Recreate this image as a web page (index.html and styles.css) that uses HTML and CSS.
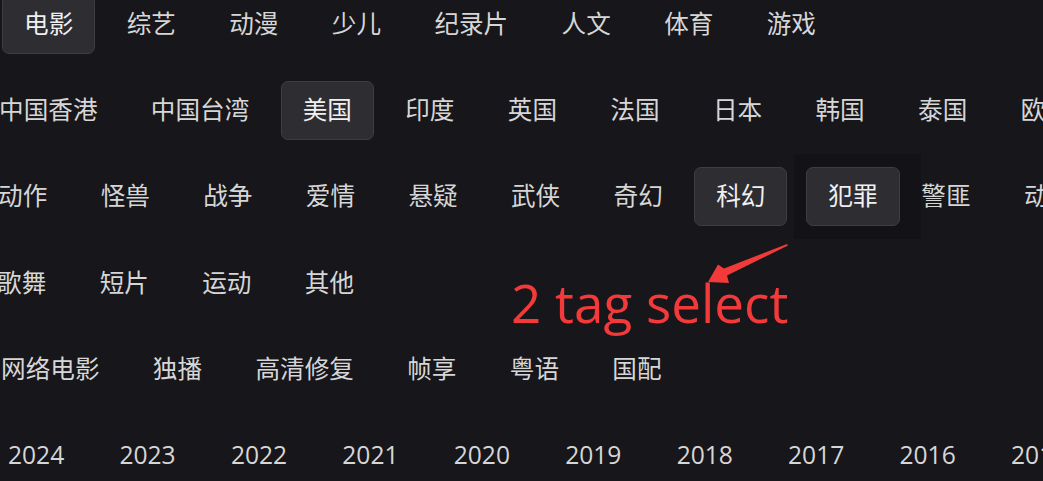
FILE: index.html
```html
<!DOCTYPE html>
<html lang="zh">
<head>
  <meta charset="UTF-8">
  <title>筛选</title>
  <meta name="viewport" content="width=device-width, initial-scale=1">
  <link rel="stylesheet" href="styles.css">
</head>
<body>
  <div class="filters">
    <div class="row row-type">
      <span class="tag active">电影</span>
      <span class="tag">综艺</span>
      <span class="tag">动漫</span>
      <span class="tag">少儿</span>
      <span class="tag">纪录片</span>
      <span class="tag">人文</span>
      <span class="tag">体育</span>
      <span class="tag">游戏</span>
    </div>

    <div class="row row-area">
      <span class="tag">中国香港</span>
      <span class="tag">中国台湾</span>
      <span class="tag active">美国</span>
      <span class="tag">印度</span>
      <span class="tag">英国</span>
      <span class="tag">法国</span>
      <span class="tag">日本</span>
      <span class="tag">韩国</span>
      <span class="tag">泰国</span>
      <span class="tag">欧洲</span>
    </div>

    <div class="row row-genre">
      <span class="tag">动作</span>
      <span class="tag">怪兽</span>
      <span class="tag">战争</span>
      <span class="tag">爱情</span>
      <span class="tag">悬疑</span>
      <span class="tag">武侠</span>
      <span class="tag">奇幻</span>
      <span class="tag active">科幻</span>
      <span class="hover-wrap"><span class="tag active">犯罪</span></span>
      <span class="tag">警匪</span>
      <span class="tag">动画</span>
    </div>

    <div class="row row-more">
      <span class="tag">歌舞</span>
      <span class="tag">短片</span>
      <span class="tag">运动</span>
      <span class="tag">其他</span>
    </div>

    <div class="row row-special">
      <span class="tag">网络电影</span>
      <span class="tag">独播</span>
      <span class="tag">高清修复</span>
      <span class="tag">帧享</span>
      <span class="tag">粤语</span>
      <span class="tag">国配</span>
    </div>

    <div class="row row-years">
      <span class="tag">2024</span>
      <span class="tag">2023</span>
      <span class="tag">2022</span>
      <span class="tag">2021</span>
      <span class="tag">2020</span>
      <span class="tag">2019</span>
      <span class="tag">2018</span>
      <span class="tag">2017</span>
      <span class="tag">2016</span>
      <span class="tag">2015</span>
    </div>
  </div>

  <!-- annotation -->
  <div class="note">2 tag select</div>
  <svg class="arrow" width="1043" height="481" viewBox="0 0 1043 481">
    <polygon points="787,244 788,245.5 727,275.5 729,283 708,282 718,264.5 724,268.5" fill="#f23a3a"/>
  </svg>
</body>
</html>
```

FILE: styles.css
```css
html, body {
  margin: 0;
  height: 100%;
}
body {
  background: #17161b;
  font-family: "Open Sans", "Noto Sans CJK SC", sans-serif;
  color: #d6d6d6;
  overflow: hidden;
  position: relative;
}
.filters {
  display: flex;
  flex-direction: column;
  gap: 27.3px;
  margin-top: -5.5px;
}
.row {
  display: flex;
  gap: 9.2px;
  white-space: nowrap;
}
.row-type { margin-left: 2px; }
.row-area { margin-left: -23px; }
.row-genre { margin-left: -24px; }
.row-more { margin-left: -25px; }
.row-special { margin-left: -21px; }
.row-years { margin-left: -15px; }
.row-years .tag { padding: 0 22px; }

.tag {
  flex: none;
  box-sizing: border-box;
  height: 59px;
  padding: 0 21.1px;
  display: flex;
  align-items: center;
  font-size: 24.6px;
  line-height: 1;
  border: 1px solid transparent;
  border-radius: 7px;
}
.tag.active {
  background: #2e2d32;
  border-color: #3e3d42;
  color: #f0f0f0;
}

/* hovered tag: nudged right, dark plate behind */
.hover-wrap {
  flex: none;
  display: flex;
  padding: 13px 21px 13px 12px;
  margin: -13px -30.6px -13px -2.4px;
  background: #131217;
}

.note {
  position: absolute;
  left: 511px;
  top: 276px;
  font-size: 53px;
  line-height: 1;
  color: #f23a3a;
}
.arrow {
  position: absolute;
  left: 0;
  top: 0;
  pointer-events: none;
}
```
